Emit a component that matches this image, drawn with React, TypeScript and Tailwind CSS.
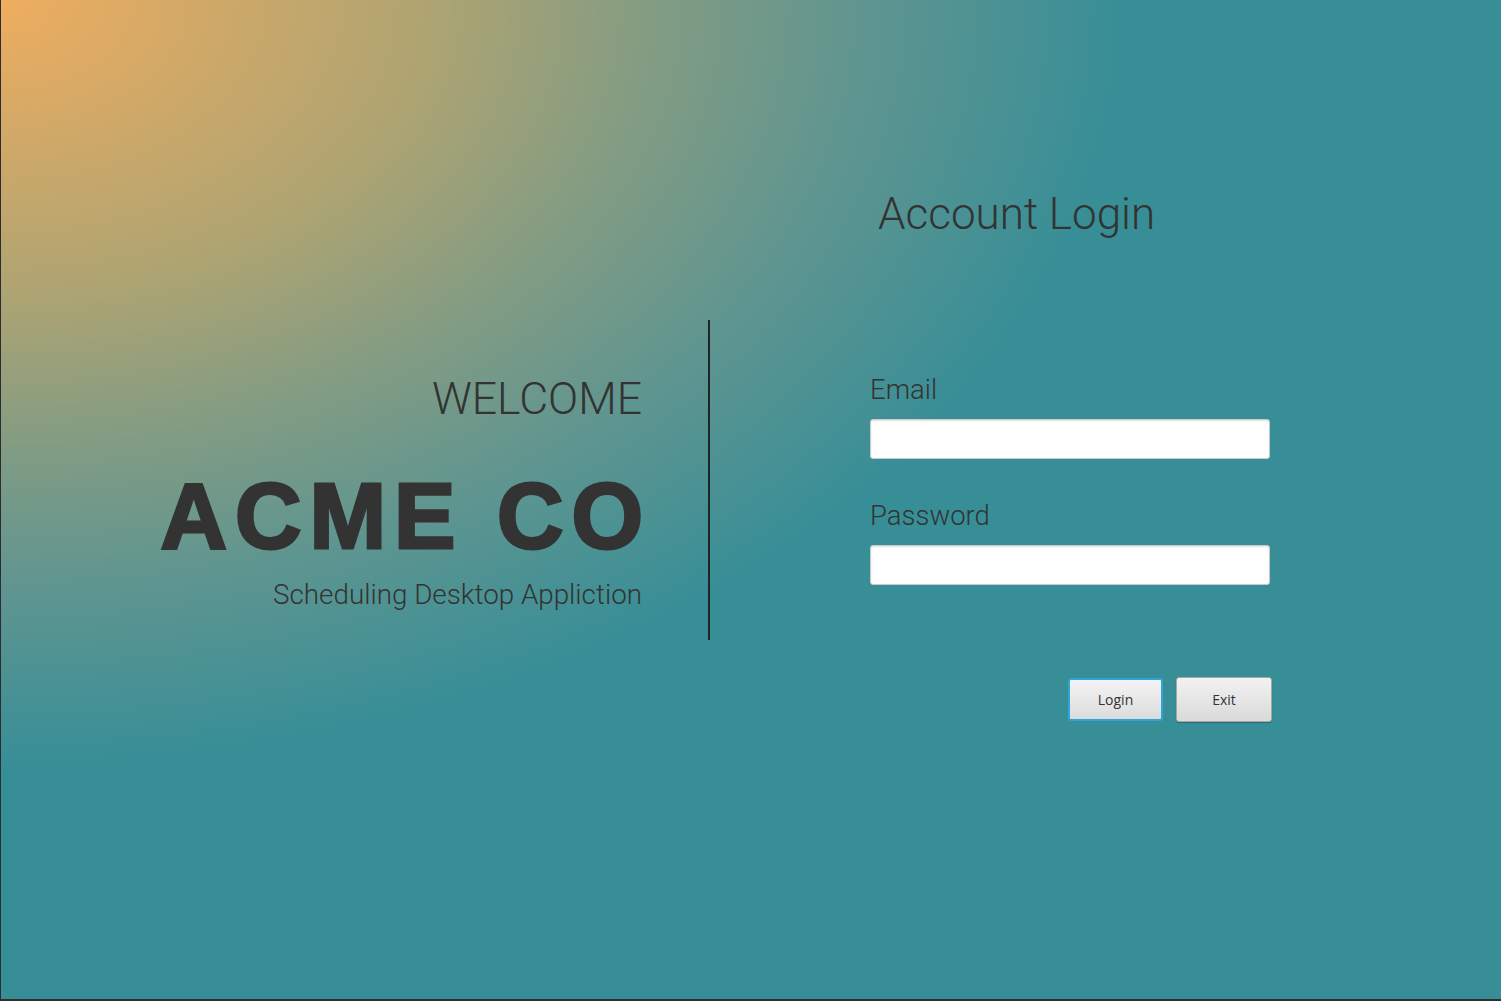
import React from "react";

const roboto = "font-['Roboto',sans-serif] font-light";

export default function App() {
	return (
		<div className="flex h-[1001px] w-full overflow-hidden border-l border-b-2 border-[#2b2d30] bg-[#378e97] bg-[radial-gradient(ellipse_1130px_770px_at_0_0,#efad5f_0%,#aea472_38%,#829c83_58%,#5e9590_77%,#378e97_100%)] text-[#333333]">
			{/* left: brand */}
			<div className="flex w-[641px] shrink-0 flex-col items-end pt-[377px] text-right">
				<h2 className={`${roboto} text-[44.5px] leading-none`}>WELCOME</h2>
				<h1 className="mt-[48px] mr-[-9px] font-['Liberation_Sans',Arial,sans-serif] text-[92px] font-bold leading-none tracking-[8px] whitespace-nowrap [-webkit-text-stroke:3px_#333333]">
					ACME CO
				</h1>
				<p className={`${roboto} mt-[19px] text-[27.8px] leading-none`}>
					Scheduling Desktop Appliction
				</p>
			</div>

			<div className="ml-[66px] mt-[320px] h-[320px] w-[2px] shrink-0 bg-[#1f2426]" />

			{/* right: login form */}
			<div className="ml-[160px] flex w-[402px] shrink-0 flex-col pt-[192px]">
				<h2 className={`${roboto} pl-[8px] text-[44px] leading-none`}>Account Login</h2>

				<label className={`${roboto} mt-[140px] text-[27.5px] leading-none`}>Email</label>
				<input
					type="text"
					className="mt-[15px] h-[40px] w-[400px] rounded-[3px] border border-[#c9cccc] bg-white shadow-[inset_0_1px_2px_rgba(0,0,0,0.12)] outline-none"
				/>

				<label className={`${roboto} mt-[43px] text-[27.5px] leading-none`}>Password</label>
				<input
					type="password"
					className="mt-[16px] h-[40px] w-[400px] rounded-[3px] border border-[#c9cccc] bg-white shadow-[inset_0_1px_2px_rgba(0,0,0,0.12)] outline-none"
				/>

				<div className="mt-[92px] flex items-start justify-end gap-[13px]">
					<button className="mt-[1px] h-[43px] w-[95px] rounded-[3px] border-2 border-[#2ea4d9] bg-gradient-to-b from-[#f4f4f4] to-[#dcdcdc] font-['Open_Sans',sans-serif] text-[14px] text-[#333333]">
						Login
					</button>
					<button className="h-[45px] w-[96px] rounded-[3px] border border-[#a7a7a7] bg-gradient-to-b from-[#f2f2f2] to-[#dadada] font-['Open_Sans',sans-serif] text-[14px] text-[#333333] shadow-[0_1px_1px_rgba(0,0,0,0.25)]">
						Exit
					</button>
				</div>
			</div>
		</div>
	);
}
